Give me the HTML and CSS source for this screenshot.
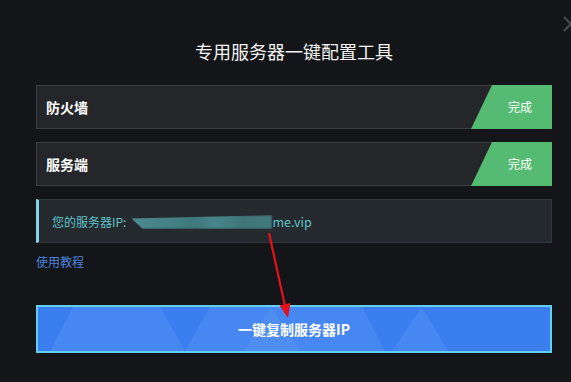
FILE: index.html
```html
<!DOCTYPE html>
<html lang="zh-CN">
<head>
<meta charset="utf-8">
<title>专用服务器一键配置工具</title>
<link rel="stylesheet" href="styles.css">
</head>
<body>
<div class="dialog">
  <svg class="close" width="16" height="16" viewBox="0 0 16 16"><path d="M1 1 L15 15 M15 1 L1 15" stroke="#4b4c50" stroke-width="2" fill="none"/></svg>
  <h1 class="title">专用服务器一键配置工具</h1>
  <div class="step">
    <div class="step-label">防火墙</div>
    <div class="step-done">完成</div>
  </div>
  <div class="step">
    <div class="step-label">服务端</div>
    <div class="step-done">完成</div>
  </div>
  <div class="ip-box">
    <span class="ip-label">您的服务器IP:</span><span class="ip-blur"></span><span class="ip-text">me.vip</span>
  </div>
  <a class="help" href="#">使用教程</a>
  <button class="copy-btn">
    <svg class="copy-bg" width="512" height="44" viewBox="0 0 512 44" preserveAspectRatio="none">
      <polygon points="35,0 122,0 147,44 12,44" fill="#ffffff" fill-opacity="0.07"/>
      <polygon points="172,0 324,0 347,44 147,44" fill="#ffffff" fill-opacity="0.07"/>
      <polygon points="233,0 262,44 206,44" fill="#ffffff" fill-opacity="0.05"/>
      <polygon points="384,0 410,44 354,44" fill="#ffffff" fill-opacity="0.07"/>
    </svg>
    <span class="copy-text">一键复制服务器IP</span>
  </button>
  <svg class="arrow" width="571" height="382" viewBox="0 0 571 382">
    <line x1="269" y1="233" x2="285" y2="306" stroke="#e4111b" stroke-width="2.2"/>
    <polygon points="288,318 290.5,303 279.5,305.5" fill="#e4111b"/>
  </svg>
</div>
</body>
</html>
```
FILE: styles.css
```css
html, body {
  margin: 0;
  padding: 0;
}
body {
  width: 571px;
  height: 382px;
  overflow: hidden;
  background: #141518;
  font-family: "Noto Sans CJK SC", "Microsoft YaHei", sans-serif;
  position: relative;
}
.dialog {
  width: 516px;
  padding: 0 0 0 36px;
}
.close {
  position: absolute;
  left: 563px;
  top: 16px;
}
.arrow {
  position: absolute;
  left: 0;
  top: 0;
  pointer-events: none;
}
.title {
  margin: 0;
  padding-top: 39px;
  height: 24px;
  line-height: 24px;
  font-size: 18px;
  font-weight: normal;
  color: #f2f2f2;
  text-align: center;
  margin-bottom: 22px;
}
.step {
  display: flex;
  height: 42px;
  background: #25262a;
  border: 1px solid #3d3e42;
  margin-bottom: 13px;
}
.step-label {
  flex: 1;
  padding-left: 9px;
  line-height: 42px;
  font-size: 14px;
  font-weight: bold;
  color: #ffffff;
}
.step-done {
  width: 64px;
  margin: -1px -1px -1px 0;
  padding-left: 17px;
  height: 44px;
  line-height: 44px;
  text-align: center;
  background: #56bb72;
  color: #ffffff;
  font-size: 12px;
  clip-path: polygon(21px 0, 100% 0, 100% 100%, 0 100%);
}
.ip-box {
  display: flex;
  align-items: center;
  height: 42px;
  background: #252a2f;
  border: 1px solid #32373c;
  border-left: 3px solid #86d2eb;
  padding-left: 13px;
  font-size: 12px;
  color: #5ec4ca;
}
.ip-label {
  margin-right: 5px;
}
.ip-blur {
  display: inline-block;
  width: 141px;
  height: 14px;
  margin-top: 2px;
  background: linear-gradient(90deg, #4b8a8f 0%, #447f84 30%, #3f777b 45%, #48858a 60%, #3e7579 80%, #417a7e 100%);
  filter: blur(1.2px);
  clip-path: polygon(0 25%, 100% 0, 100% 100%, 8% 100%);
}
.ip-text {
  color: #5ec4ca;
  font-size: 12.5px;
}
.help {
  display: block;
  margin-top: 11px;
  height: 16px;
  line-height: 16px;
  font-size: 12px;
  color: #4c83df;
  text-decoration: none;
}
.copy-btn {
  display: block;
  position: relative;
  margin-top: 35px;
  width: 516px;
  height: 48px;
  padding: 0;
  border: 2px solid #62cef3;
  background: #3a7ef0;
  color: #ffffff;
  font-family: inherit;
  font-size: 14px;
  font-weight: bold;
  overflow: hidden;
}
.copy-bg {
  position: absolute;
  left: 0;
  top: 0;
}
.copy-text {
  position: relative;
  line-height: 44px;
}
```
